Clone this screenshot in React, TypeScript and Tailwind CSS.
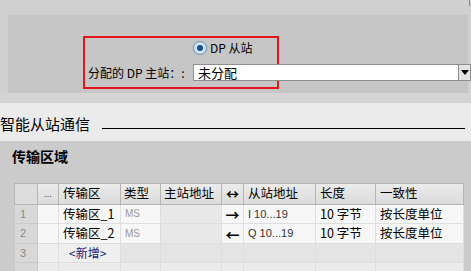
import React from "react";

const cols = [23, 21, 62, 40, 61, 22, 72, 60, 88];

const rows = [
  { n: "1", name: "传输区_1", type: "MS", dir: "→", addr: "I 10...19", len: "10 字节", cons: "按长度单位" },
  { n: "2", name: "传输区_2", type: "MS", dir: "←", addr: "Q 10...19", len: "10 字节", cons: "按长度单位" },
];

export default function App() {
  const font = { fontFamily: '"Noto Sans CJK SC", "Liberation Sans", sans-serif' };
  return (
    <div className="w-[471px] h-[271px] overflow-hidden bg-[#d0d0d0] text-black" style={font}>
      {/* Top panel */}
      <div className="h-[15px] relative">
        <div className="absolute right-[1px] top-0 h-[6px] w-px bg-[#8a8a8a]" />
      </div>
      <div className="ml-[8px] mr-[3px] h-[78px] bg-[#c6c6c6] pt-[21px] pl-[75px]">
        <div className="w-[196px] h-[53px] border-2 border-[#e8141b] relative">
          <div className="absolute left-[108px] top-[2px] flex items-center gap-[3px]">
            <span className="w-[14px] h-[14px] rounded-full border border-[#6f8fb2] bg-[radial-gradient(circle,#e6f3ff_0%,#b9d7f3_100%)] flex items-center justify-center">
              <span className="w-[6px] h-[6px] rounded-full bg-[#1b4f8a]" />
            </span>
            <span className="text-[12px] leading-[16px]">DP 从站</span>
          </div>
        </div>
      </div>
      {/* Master select row overlays panel */}
      <div className="relative">
        <div className="absolute left-[88px] top-[-29px] flex items-center">
          <span className="text-[12px] leading-[17px] w-[105px]">分配的 DP 主站：:</span>
          <div className="w-[266px] h-[17px] bg-white border border-[#8f8f8f] flex items-center pl-[4px] text-[13px] leading-[15px]">未分配</div>
          <div className="w-[12px] h-[17px] bg-[#e4e4e4] border border-[#8f8f8f] border-l-0 flex items-center justify-center">
            <span className="w-0 h-0 border-l-[4px] border-r-[4px] border-t-[5px] border-l-transparent border-r-transparent border-t-black" />
          </div>
        </div>
      </div>
      <div className="h-[10px] bg-[#d4d4d4]" />
      {/* Section heading */}
      <div className="h-[38px] bg-[#ebebeb] flex items-center">
        <span className="text-[15px] leading-[20px] pl-0 mt-[3px]">智能从站通信</span>
        <div className="ml-[12px] flex-1 h-px bg-black mt-[12px] mr-[6px]" />
      </div>
      {/* Transfer area */}
      <div className="bg-[#cbcbcb] h-[130px] pt-[5px]">
        <div className="pl-[12px] text-[14px] font-bold leading-[20px]">传输区域</div>
        <div className="mt-[17px] ml-[14px] flex">
          <table className="border-collapse text-[12.5px] table-fixed" style={{ width: 449 }}>
            <colgroup>
              {cols.map((w, i) => (
                <col key={i} style={{ width: w }} />
              ))}
            </colgroup>
            <thead>
              <tr className="h-[19px] bg-[linear-gradient(#ececec,#dadada)]">
                <th className="border border-[#b5b5b5] bg-[#dcdcdc]" />
                <th className="border border-[#b5b5b5] font-normal text-[9px] text-[#555]">...</th>
                <th className="border border-[#b5b5b5] font-normal text-left pl-[4px]">传输区</th>
                <th className="border border-[#b5b5b5] font-normal text-left pl-[3px]">类型</th>
                <th className="border border-[#b5b5b5] font-normal text-left pl-[3px]">主站地址</th>
                <th className="border border-[#b5b5b5] font-bold text-center text-[13px]">↔</th>
                <th className="border border-[#b5b5b5] font-normal text-left pl-[4px]">从站地址</th>
                <th className="border border-[#b5b5b5] font-normal text-left pl-[4px]">长度</th>
                <th className="border border-[#b5b5b5] font-normal text-left pl-[4px]">一致性</th>
              </tr>
            </thead>
            <tbody>
              {rows.map((r) => (
                <tr key={r.n} className="h-[19px] bg-[#f7f7f7]">
                  <td className="border border-[#c9c9c9] bg-[#d8d8d8] text-[#8a8a8a] pl-[5px] text-[11px]" style={{ fontFamily: '"Liberation Sans", sans-serif' }}>{r.n}</td>
                  <td className="border border-[#dedede]" />
                  <td className="border border-[#dedede] pl-[4px]">{r.name}</td>
                  <td className="border border-[#dedede] pl-[4px] text-[10px] text-[#9a9a9a]" style={{ fontFamily: '"Liberation Sans", sans-serif' }}>{r.type}</td>
                  <td className="border border-[#dedede] bg-[#e8e8e8]" />
                  <td className="border border-[#dedede] text-center font-bold text-[14px] leading-[14px]">{r.dir}</td>
                  <td className="border border-[#dedede] pl-[4px] text-[11px] text-[#333]" style={{ fontFamily: '"Liberation Sans", sans-serif' }}>{r.addr}</td>
                  <td className="border border-[#dedede] pl-[4px]">{r.len}</td>
                  <td className="border border-[#dedede] pl-[4px]">{r.cons}</td>
                </tr>
              ))}
              <tr className="h-[19px] bg-[#e4e4e4]">
                <td className="border border-[#c9c9c9] bg-[#d8d8d8] text-[#8a8a8a] pl-[5px] text-[11px]" style={{ fontFamily: '"Liberation Sans", sans-serif' }}>3</td>
                <td className="border border-[#dedede] bg-[#efefef]" />
                <td className="border border-[#dedede] pl-[10px] text-[12px] text-[#1a237e] bg-[#efefef]">&lt;新增&gt;</td>
                <td className="border border-[#dedede]" />
                <td className="border border-[#dedede]" />
                <td className="border border-[#dedede]" />
                <td className="border border-[#dedede]" />
                <td className="border border-[#dedede]" />
                <td className="border border-[#dedede]" />
              </tr>
              <tr className="h-[19px] bg-[#ececec]">
                <td className="border border-[#c9c9c9] bg-[#d8d8d8]" />
                <td className="border border-[#dedede]" />
                <td className="border border-[#dedede]" />
                <td className="border border-[#dedede]" />
                <td className="border border-[#dedede]" />
                <td className="border border-[#dedede]" />
                <td className="border border-[#dedede]" />
                <td className="border border-[#dedede]" />
                <td className="border border-[#dedede]" />
              </tr>
            </tbody>
          </table>
        </div>
      </div>
    </div>
  );
}
